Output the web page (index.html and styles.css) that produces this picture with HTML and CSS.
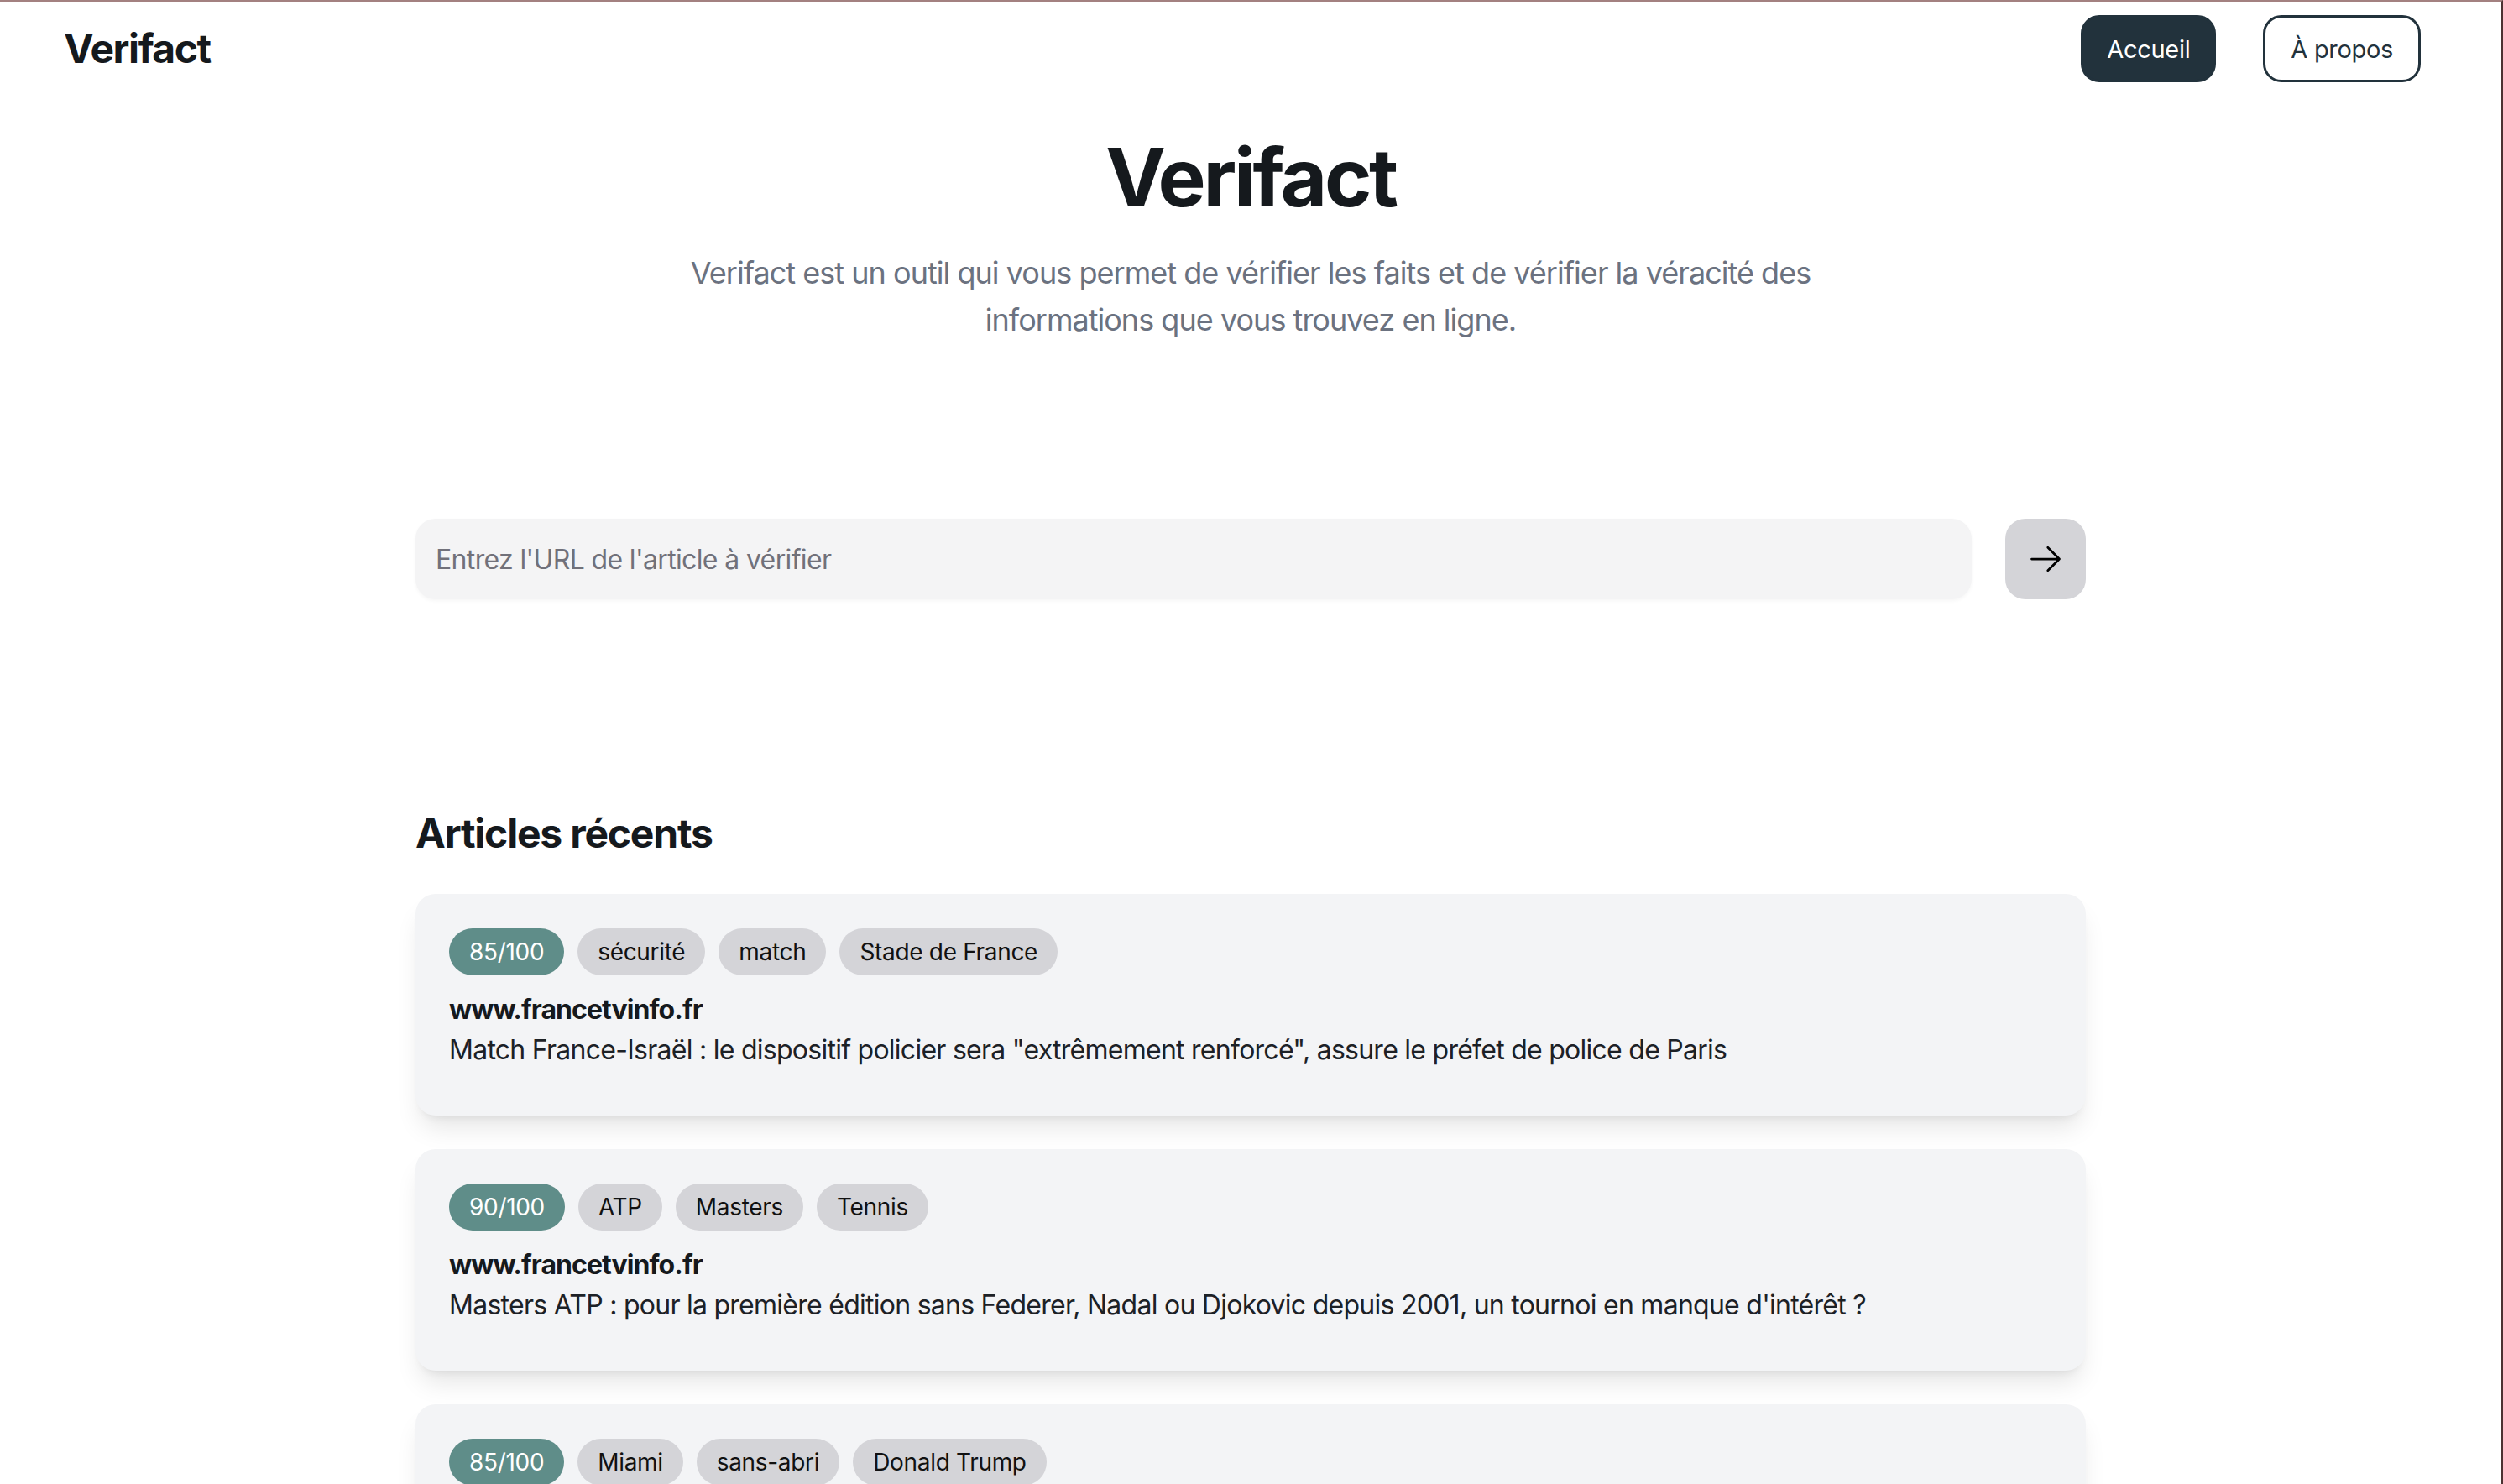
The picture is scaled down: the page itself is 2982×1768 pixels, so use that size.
FILE: index.html
```html
<!DOCTYPE html>
<html lang="fr">
<head>
<meta charset="utf-8">
<title>Verifact</title>
<link rel="stylesheet" href="styles.css">
</head>
<body>
<header class="topbar">
  <div class="logo">Verifact</div>
  <nav class="nav">
    <a class="nav-btn nav-btn--active" href="#">Accueil</a>
    <a class="nav-btn nav-btn--outline" href="#">À propos</a>
  </nav>
</header>

<main>
  <section class="hero">
    <h1 class="hero-title">Verifact</h1>
    <p class="hero-sub">Verifact est un outil qui vous permet de vérifier les faits et de vérifier la véracité des informations que vous trouvez en ligne.</p>
  </section>

  <form class="search" onsubmit="return false">
    <input class="search-input" type="text" placeholder="Entrez l'URL de l'article à vérifier">
    <button class="search-btn" type="submit" aria-label="Vérifier">
      <svg class="search-icon" viewBox="0 0 24 24" fill="none" stroke="currentColor" stroke-width="1.5" stroke-linecap="round" stroke-linejoin="round"><path d="M13.5 4.5L21 12m0 0l-7.5 7.5M21 12H3"/></svg>
    </button>
  </form>

  <section class="recent">
    <h2 class="recent-title">Articles récents</h2>
    <div class="cards">
      <article class="card">
        <div class="tags">
          <span class="tag tag--score">85/100</span>
          <span class="tag">sécurité</span>
          <span class="tag">match</span>
          <span class="tag">Stade de France</span>
        </div>
        <div class="card-domain">www.francetvinfo.fr</div>
        <p class="card-desc">Match France-Israël : le dispositif policier sera "extrêmement renforcé", assure le préfet de police de Paris</p>
      </article>
      <article class="card">
        <div class="tags">
          <span class="tag tag--score">90/100</span>
          <span class="tag">ATP</span>
          <span class="tag">Masters</span>
          <span class="tag">Tennis</span>
        </div>
        <div class="card-domain">www.francetvinfo.fr</div>
        <p class="card-desc">Masters ATP : pour la première édition sans Federer, Nadal ou Djokovic depuis 2001, un tournoi en manque d'intérêt ?</p>
      </article>
      <article class="card">
        <div class="tags">
          <span class="tag tag--score">85/100</span>
          <span class="tag">Miami</span>
          <span class="tag">sans-abri</span>
          <span class="tag">Donald Trump</span>
        </div>
        <div class="card-domain">www.francetvinfo.fr</div>
        <p class="card-desc">Miami : les sans-abri et Donald Trump</p>
      </article>
    </div>
  </section>
</main>
</body>
</html>
```

FILE: styles.css
```css
html {
  border-top: 2px solid #a38180;
  border-right: 2px solid #4c3232;
  background: #ffffff;
}

body {
  margin: 0;
  font-family: Inter, "Noto Sans", "Liberation Sans", sans-serif;
  letter-spacing: -0.02em;
  color: #111827;
  background: #ffffff;
}

.topbar {
  display: flex;
  justify-content: space-between;
  align-items: center;
  padding: 16px 96px 0 76px;
}

.logo {
  font-size: 48px;
  font-weight: 700;
  line-height: 64px;
  letter-spacing: -0.03em;
  color: #15191d;
}

.nav {
  display: flex;
  gap: 56px;
}

.nav-btn {
  display: flex;
  align-items: center;
  justify-content: center;
  height: 80px;
  box-sizing: border-box;
  padding: 0 30px;
  border: 3px solid #22323c;
  border-radius: 22px;
  font-size: 29px;
  text-decoration: none;
}

.nav-btn--active {
  background: #22323c;
  color: #ffffff;
  padding: 0 28px;
}

.nav-btn--outline {
  background: #ffffff;
  color: #22323c;
}

.hero {
  margin-top: 65px;
  text-align: center;
}

.hero-title {
  margin: 0;
  font-size: 96px;
  line-height: 1;
  font-weight: 700;
  letter-spacing: -0.035em;
  color: #15191d;
}

.hero-sub {
  max-width: 1380px;
  margin: 38px auto 0;
  font-size: 36px;
  line-height: 56px;
  letter-spacing: -0.027em;
  color: #6b7280;
}

.search {
  display: flex;
  gap: 40px;
  width: 1990px;
  margin: 209px auto 0;
}

.search-input {
  flex: 1;
  height: 96px;
  box-sizing: border-box;
  padding: 0 24px;
  border: none;
  border-radius: 24px;
  background: #f4f4f5;
  box-shadow: 0 2px 4px rgba(0, 0, 0, 0.04);
  font-family: inherit;
  font-size: 32px;
  letter-spacing: -0.02em;
  color: #111827;
  outline: none;
}

.search-input::placeholder {
  color: #71717a;
}

.search-btn {
  width: 96px;
  height: 96px;
  flex: none;
  display: flex;
  align-items: center;
  justify-content: center;
  border: none;
  border-radius: 24px;
  background: #d4d4d8;
  color: #000000;
  padding: 0;
}

.search-icon {
  width: 44px;
  height: 44px;
}

.recent {
  width: 1990px;
  margin: 247px auto 0;
}

.recent-title {
  margin: 0;
  font-size: 48px;
  line-height: 64px;
  font-weight: 700;
  letter-spacing: -0.025em;
  color: #15191d;
}

.cards {
  display: flex;
  flex-direction: column;
  gap: 40px;
  margin-top: 40px;
}

.card {
  padding: 41px 40px 54px;
  background: #f3f4f6;
  border-radius: 24px;
  box-shadow: 0 20px 30px -6px rgba(0, 0, 0, 0.1), 0 8px 12px -8px rgba(0, 0, 0, 0.1);
}

.tags {
  display: flex;
  gap: 16px;
}

.tag {
  padding: 8px 24px;
  border-radius: 999px;
  background: #d4d4d8;
  font-size: 28px;
  line-height: 40px;
  color: #111111;
}

.tag--score {
  background: #5f8d89;
  color: #ffffff;
}

.card-domain {
  margin-top: 17px;
  font-size: 32px;
  line-height: 48px;
  font-weight: 700;
  letter-spacing: -0.03em;
  color: #15191d;
}

.card-desc {
  margin: 0;
  font-size: 32px;
  line-height: 48px;
  letter-spacing: -0.023em;
  color: #1c2126;
}
```
